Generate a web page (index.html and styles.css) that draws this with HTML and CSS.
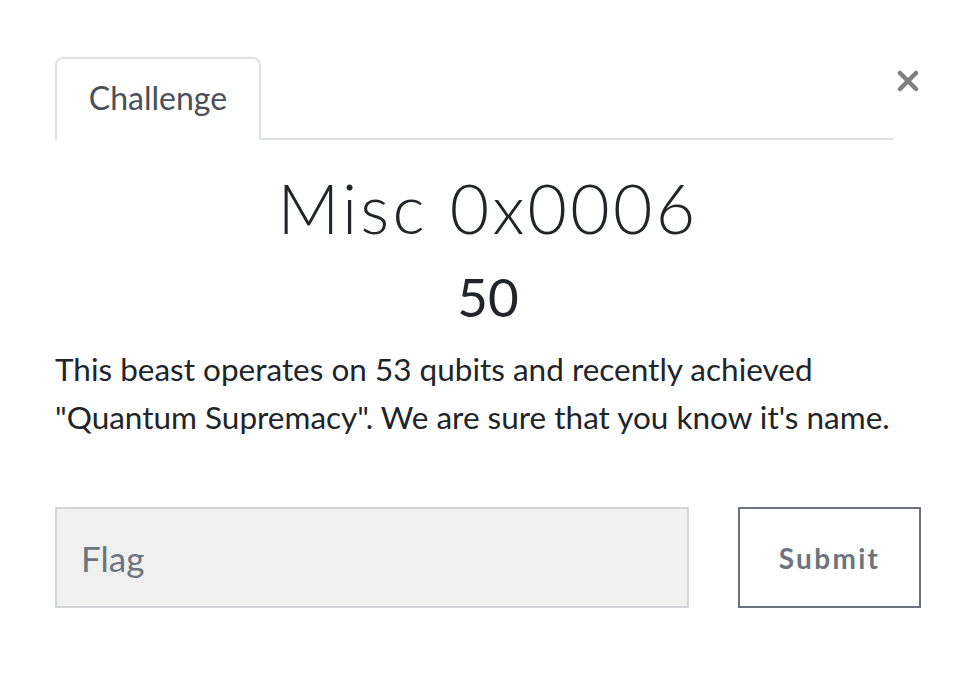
FILE: index.html
```html
<!DOCTYPE html>
<html>
<head>
<meta charset="utf-8">
<link rel="stylesheet" href="styles.css">
</head>
<body>
<div class="modal">
  <div class="head">
    <div class="tabs">
      <div class="tab">Challenge</div>
    </div>
    <button class="close" aria-label="Close">
      <svg width="22" height="22" viewBox="0 0 22 22"><path d="M3 3 L19 19 M19 3 L3 19" stroke="#808080" stroke-width="4.5" stroke-linecap="round"/></svg>
    </button>
  </div>
  <h2 class="title">Misc 0x0006</h2>
  <h4 class="points">50</h4>
  <p class="desc">This beast operates on 53 qubits and recently achieved "Quantum Supremacy". We are sure that you know it's name.</p>
  <form class="submit-row">
    <input class="flag" type="text" placeholder="Flag">
    <button class="submit" type="button">Submit</button>
  </form>
</div>
</body>
</html>
```
FILE: styles.css
```css
html, body {
  margin: 0;
  padding: 0;
  background: #ffffff;
}
.modal {
  padding: 57px 57px 0 55px;
  font-family: Lato, "Liberation Sans", sans-serif;
  color: #212529;
}
.head {
  display: flex;
  align-items: flex-start;
}
.tabs {
  display: flex;
  width: 838px;
  border-bottom: 2px solid #dee2e6;
}
.tab {
  width: 202px;
  height: 77px;
  border: 2px solid #dee2e6;
  border-bottom: none;
  border-radius: 8px 8px 0 0;
  margin-bottom: -2px;
  background: #fff;
  font-size: 32px;
  color: #495057;
  display: flex;
  align-items: center;
  justify-content: center;
  padding-bottom: 4px;
  box-sizing: content-box;
}
.close {
  border: none;
  background: none;
  padding: 0;
  margin: 13px 0 0 4px;
  width: 22px;
  height: 22px;
  display: flex;
}
.title {
  margin: 27px 0 0;
  text-align: center;
  font-weight: 300;
  font-size: 68px;
  line-height: 1.2;
  letter-spacing: 3.3px;
}
.points {
  margin: 16px 0 0;
  text-align: center;
  font-weight: 400;
  font-size: 53px;
  line-height: 1.2;
}
.desc {
  margin: 17px 0 0;
  font-size: 31.5px;
  line-height: 48px;
  width: 866px;
}
.submit-row {
  display: flex;
  gap: 49px;
  margin-top: 66px;
}
.flag {
  box-sizing: border-box;
  width: 634px;
  height: 101px;
  border: 2px solid #d1d5da;
  background: #f0f0f0;
  padding: 0 24px;
  font-family: Lato, "Liberation Sans", sans-serif;
  font-size: 35px;
  color: #495057;
  outline: none;
}
.flag::placeholder {
  color: #6c757d;
}
.submit {
  box-sizing: border-box;
  width: 183px;
  height: 101px;
  border: 2px solid #6c757d;
  background: #fff;
  font-family: Lato, "Liberation Sans", sans-serif;
  font-weight: 700;
  font-size: 28px;
  letter-spacing: 2.3px;
  color: #6c757d;
}
```
